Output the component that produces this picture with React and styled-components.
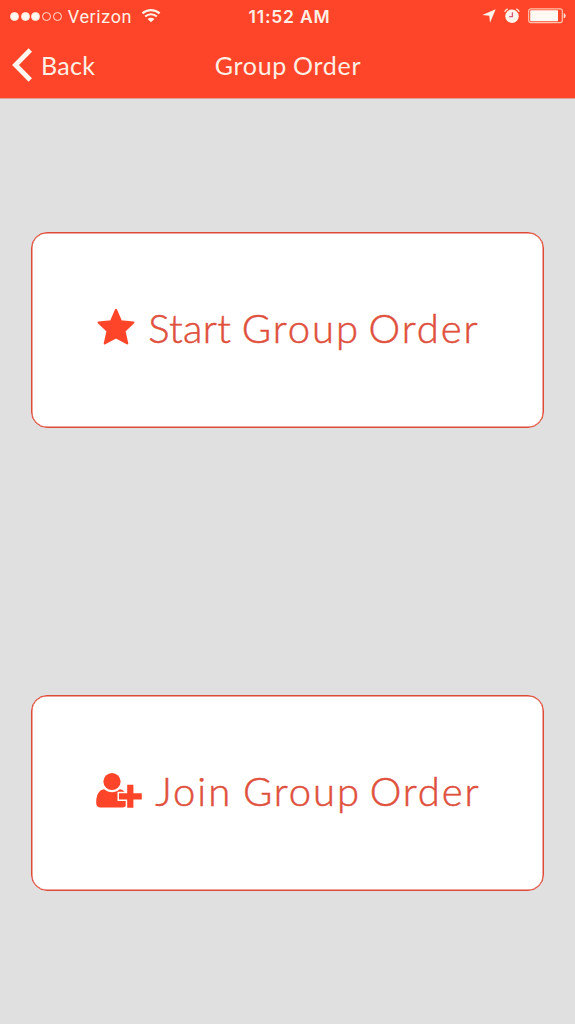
import styled, { createGlobalStyle } from "styled-components";

const App = () => {
  return (
    <>
      <GlobalStyle />
      <Container>
        <Header>
          <StatusBar>
            <Carrier>
              <SignalDots>
                {[true, true, true, false, false].map((filled, i) => (
                  <Dot key={i} $filled={filled} />
                ))}
              </SignalDots>
              <CarrierName>Verizon</CarrierName>
              <WifiIcon />
            </Carrier>
            <Time>11:52 AM</Time>
            <StatusIcons>
              <LocationIcon />
              <AlarmIcon />
              <BatteryIcon />
            </StatusIcons>
          </StatusBar>
          <NavBar>
            <BackButton>
              <BackIcon />
              <BackLabel>Back</BackLabel>
            </BackButton>
            <Title>Group Order</Title>
          </NavBar>
        </Header>
        <Content>
          <Card>
            <StarIcon />
            <CardLabel>
              <FirstWord $spacing="0.3px">Start</FirstWord> Group Order
            </CardLabel>
          </Card>
          <Card>
            <JoinIcon />
            <CardLabel>
              <FirstWord $spacing="2px">Join</FirstWord> Group Order
            </CardLabel>
          </Card>
        </Content>
      </Container>
    </>
  );
};

const WifiIcon = () => (
  <svg width="20" height="16" viewBox="0 0 20 16" fill="none" stroke="#fff2e8">
    <path d="M1.4 5.4C6.2 0.9 13.8 0.9 18.6 5.4" strokeWidth="2.2" />
    <path d="M4.2 8.5C7.5 5.5 12.5 5.5 15.8 8.5" strokeWidth="2.2" />
    <path d="M10 14.3L6.6 11C8.5 9.4 11.5 9.4 13.4 11Z" fill="#fff2e8" stroke="none" />
  </svg>
);

const LocationIcon = () => (
  <svg width="14" height="14" viewBox="0 0 14 14" fill="#fff5ec">
    <path d="M13.7 0.3L8 13.7L7.3 6.7L0.3 6Z" />
  </svg>
);

const AlarmIcon = () => (
  <svg width="16" height="16" viewBox="0 0 16 16">
    <circle cx="8" cy="8.2" r="6.7" fill="#fff5ec" />
    <path
      d="M0.9 4C1.2 2.4 2.4 1.3 3.9 1.1M15.1 4C14.8 2.4 13.6 1.3 12.1 1.1"
      fill="none"
      stroke="#ffdccd"
      strokeWidth="1.3"
    />
    <path d="M8.4 4.2V8.7H5.2" fill="none" stroke="#d8557c" strokeWidth="1.3" />
  </svg>
);

const BatteryIcon = () => (
  <svg width="39" height="16" viewBox="0 0 39 16">
    <rect x="0.7" y="0.8" width="33.6" height="13.8" rx="2" fill="none" stroke="#ffc4ac" strokeWidth="1.2" />
    <rect x="2.2" y="2.2" width="27.8" height="11" rx="0.8" fill="#fff9f4" />
    <path d="M35.7 5.2C38.4 5.6 38.4 9.8 35.7 10.2Z" fill="#ffe0d0" />
  </svg>
);

const BackIcon = () => (
  <svg width="20" height="34" viewBox="0 0 20 34" fill="none" stroke="#fff9f2" strokeWidth="4.8">
    <path d="M18.3 2L3.5 17L18.3 32" />
  </svg>
);

const StarIcon = () => (
  <CardIcon width="38" height="38" viewBox="0 0 38 38" fill="#ff4529" stroke="#ff4529">
    <path
      d="M19 2L24 13.4L36.4 14.5L27.4 23L30.2 35.4L19 29.3L7.8 35.4L10.6 23L1.6 14.5L14 13.4Z"
      strokeWidth="2.2"
      strokeLinejoin="round"
    />
  </CardIcon>
);

const JoinIcon = () => (
  <CardIcon width="46" height="38" viewBox="0 0 46 38" fill="#ff4529">
    <circle cx="16" cy="10.5" r="8.6" />
    <path d="M8.2 18.2C12.8 22.2 19.2 22.2 23.8 18.2C27.6 18.6 30 22 30.6 26.5V32.5C30.6 35.4 29 36.4 26.2 36.4H4.6C1.8 36.4 0.2 35 0.2 32C0.2 24.6 2.5 18.8 8.2 18.2Z" />
    <path
      d="M31.2 13.8H37.4V22.3H45.8V28.5H37.4V36.8H31.2V28.5H23V22.3H31.2Z"
      stroke="#ffffff"
      strokeWidth="3"
      paintOrder="stroke"
    />
  </CardIcon>
);

const GlobalStyle = createGlobalStyle`
  * {
    box-sizing: border-box;
  }

  body {
    margin: 0;
    background-color: #e0e0e0;
    font-family: Lato, "Liberation Sans", sans-serif;
  }

  svg {
    display: block;
    flex-shrink: 0;
  }
`;

const Container = styled.div`
  display: flex;
  flex-direction: column;
  height: 100vh;
  background-color: #e0e0e0;
`;

const Header = styled.header`
  display: flex;
  flex-direction: column;
  height: 98px;
  background-color: #ff4529;
  box-shadow: 0 1px 0 #d9a198;
  color: #fff0e6;
`;

const StatusBar = styled.div`
  display: grid;
  grid-template-columns: 1fr auto 1fr;
  align-items: center;
  height: 32px;
  padding: 0 8px 0 10px;
  font-family: Roboto, "Liberation Sans", sans-serif;
`;

const Carrier = styled.div`
  display: flex;
  align-items: center;
`;

const SignalDots = styled.div`
  display: flex;
  gap: 1.7px;
`;

const Dot = styled.span`
  width: 9px;
  height: 9px;
  border: 1px solid #ffe3d4;
  border-radius: 50%;
  background-color: ${({ $filled }) => ($filled ? "#fff9f2" : "transparent")};
`;

const CarrierName = styled.span`
  margin: 0 9px 0 6px;
  font-size: 18px;
  letter-spacing: 0.6px;
`;

const Time = styled.span`
  margin-right: -2px;
  font-family: Inter, "Liberation Sans", sans-serif;
  font-size: 17.5px;
  font-weight: 600;
  letter-spacing: 0.8px;
`;

const StatusIcons = styled.div`
  display: flex;
  align-items: center;
  justify-content: flex-end;
  gap: 8px;
`;

const NavBar = styled.div`
  display: grid;
  grid-template-columns: 1fr auto 1fr;
  align-items: center;
  height: 66px;
  padding: 0 12px;
`;

const BackButton = styled.div`
  display: flex;
  align-items: center;
  gap: 9px;
`;

const BackLabel = styled.span`
  font-size: 25px;
  letter-spacing: 0.3px;
`;

const Title = styled.h1`
  margin: 0 -1px 0 0;
  font-size: 25px;
  font-weight: 400;
  letter-spacing: 0.7px;
  word-spacing: -1px;
`;

const Content = styled.main`
  display: flex;
  flex-direction: column;
  gap: 267px;
  padding: 134px 31px 0;
`;

const Card = styled.div`
  display: flex;
  align-items: center;
  justify-content: center;
  height: 196px;
  padding-bottom: 4px;
  border: 1px solid #e04b38;
  border-radius: 16px;
  background-color: #ffffff;
  box-shadow: inset 0 0 0 0.5px #e04b38;
`;

const CardIcon = styled.svg`
  margin-bottom: 2px;
`;

const CardLabel = styled.span`
  margin: 0 -2px 0 13px;
  color: #e0503c;
  font-size: 40px;
  font-weight: 300;
  letter-spacing: 1.95px;
  word-spacing: -4.2px;
  white-space: nowrap;
  -webkit-text-stroke: 0.5px #e0503c;
`;

const FirstWord = styled.span`
  margin-right: 2px;
  letter-spacing: ${({ $spacing }) => $spacing};
`;

export default App;
